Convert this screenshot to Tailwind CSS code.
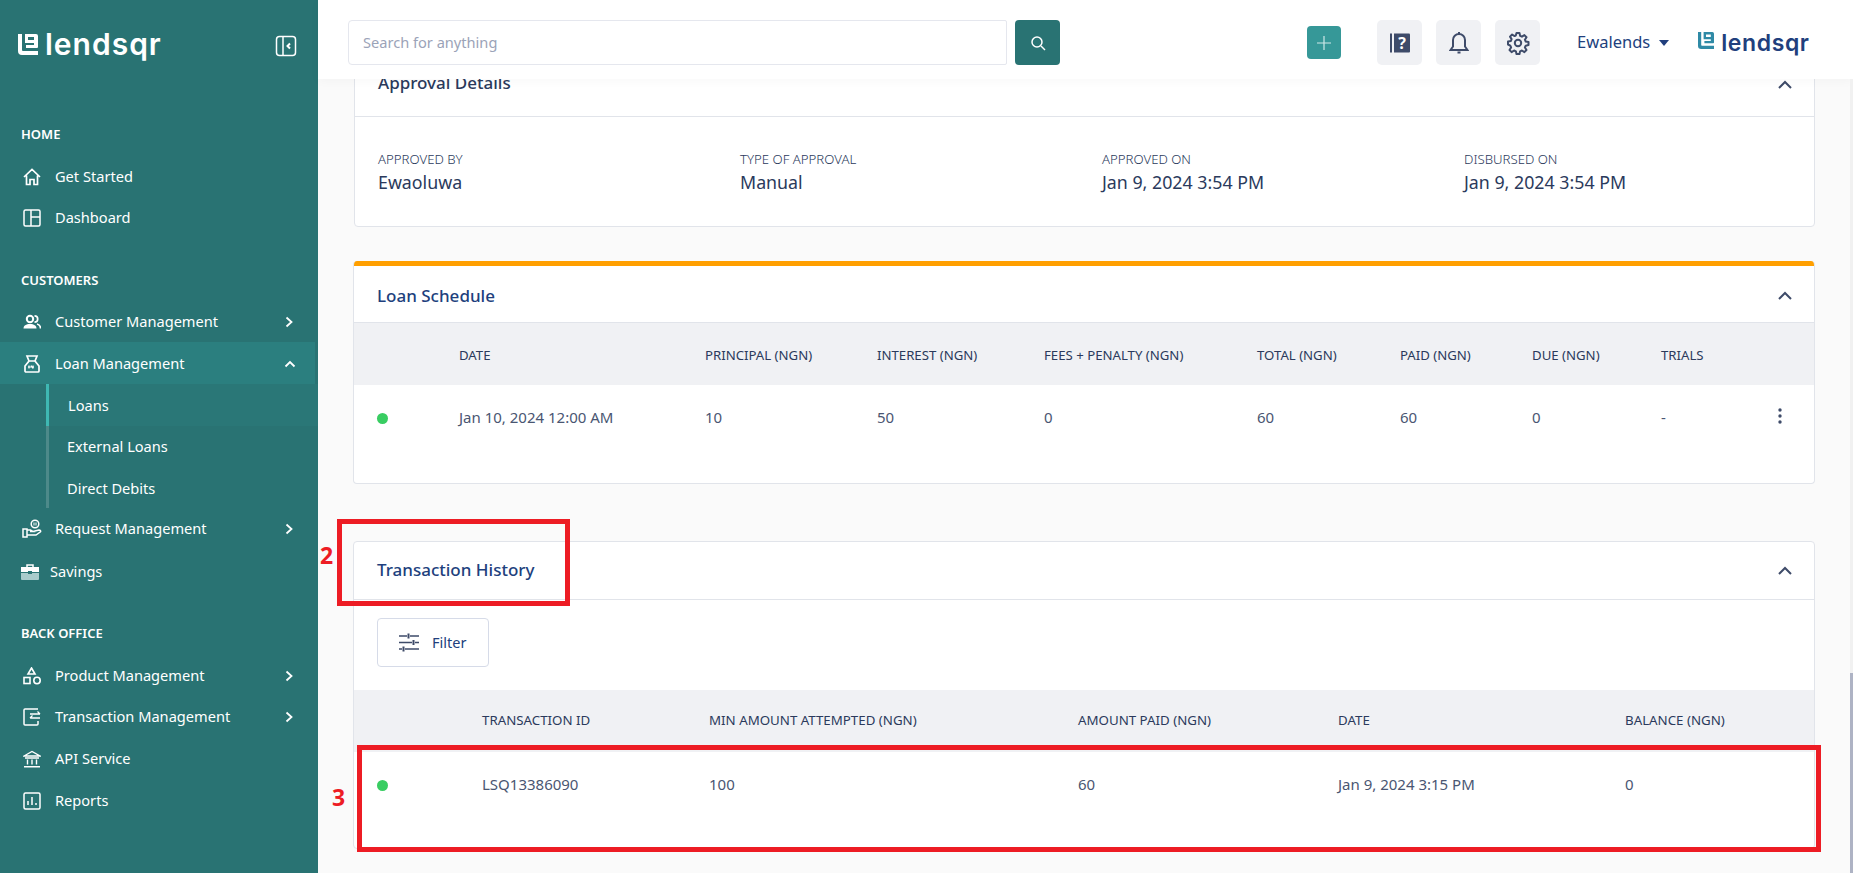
<!DOCTYPE html>
<html lang="en">
<head>
  <meta charset="UTF-8" />
  <meta name="viewport" content="width=device-width, initial-scale=1.0"/>
  <title>Lendsqr - Loan details</title>
  <script src="https://cdn.jsdelivr.net/npm/@tailwindcss/browser@4"></script>
</head>
<body class="font-['Noto_Sans',sans-serif] text-[#213f7d] bg-[#fafafa]">
<div class="relative flex h-[873px] w-[1853px] overflow-hidden">

  <!-- Sidebar -->
  <aside class="w-[318px] shrink-0 bg-[#297373] text-white flex flex-col">
    <div class="h-[113px] pt-[26px] pl-[18px] pr-[21px] flex items-start justify-between">
      <div class="flex items-center gap-[7px] h-[32px]">
        <svg class="mt-[5px]" width="20" height="21" viewBox="0 0 20 21" fill="white"><path d="M0 0h4v16a1 1 0 0 0 1 1h15v4H4a4 4 0 0 1-4-4z"/><path fill-rule="evenodd" d="M7 0h11a2 2 0 0 1 2 2v11a1 1 0 0 1-1 1H8v-3h8V9H7zM10 3v3h6V3z"/></svg>
        <span class="mt-[4px] font-['Inter',sans-serif] font-semibold text-[30px] leading-[32px] tracking-[1px]">lendsqr</span>
      </div>
      <svg class="mt-[9px]" width="22" height="22" viewBox="0 0 22 22" fill="none" stroke="white" stroke-width="1.500"><rect x="1.500" y="1.500" width="19" height="19" rx="3"/><path d="M8 2v18"/><path d="M15 8.500 12.500 11l2.500 2.500" stroke-width="2"/></svg>
    </div>

    <p class="h-[43px] pl-[21px] flex items-center text-[13px] font-semibold">HOME</p>
    <a class="h-[41px] flex items-center pl-[23px] text-[14.600px]">
      <svg class="w-[18px] h-[18px] mr-[14px]" viewBox="0 0 18 18" fill="none" stroke="white" stroke-width="1.700"><path d="M1 9 9 1.500 17 9M3.500 7.500V16.500h3.500v-5h4v5h3.500V7.500"/></svg>Get Started</a>
    <a class="h-[41px] flex items-center pl-[23px] text-[14.600px]">
      <svg class="w-[18px] h-[18px] mr-[14px]" viewBox="0 0 18 18" fill="none" stroke="white" stroke-width="1.500"><rect x="1" y="1" width="16" height="16" rx="1.500"/><path d="M8 1v16M8 8h9"/></svg>Dashboard</a>

    <p class="mt-[22px] h-[41px] pl-[21px] flex items-center text-[13px] font-semibold">CUSTOMERS</p>
    <a class="h-[41px] flex items-center pl-[23px] pr-[24px] text-[14.600px]">
      <svg class="w-[18px] h-[18px] mr-[14px]" viewBox="0 0 18 18" fill="white"><circle cx="7" cy="6" r="3.200" fill="none" stroke="white" stroke-width="2"/><path d="M0.500 15.500c0-3 2.500-4.500 6.500-4.500s6.500 1.500 6.500 4.500z"/><path d="M11.500 2.800a3.200 3.200 0 0 1 0 6.400M14 11c2 .5 3.500 1.800 3.500 4.500" fill="none" stroke="white" stroke-width="1.700"/></svg>
      <span class="flex-1">Customer Management</span>
      <svg width="10" height="12" viewBox="0 0 10 12" fill="none" stroke="white" stroke-width="1.800"><path d="m2.500 1.500 5 4.500-5 4.500"/></svg></a>
    <a class="h-[42px] pt-[2px] mr-[3px] flex items-center pl-[23px] pr-[19px] text-[14.600px] bg-[#2b7f7f]">
      <svg class="w-[18px] h-[18px] mr-[14px]" viewBox="0 0 18 18" fill="none" stroke="white" stroke-width="1.700"><path d="M4 1h10L12 6l4 5v5a1 1 0 0 1-1 1H3a1 1 0 0 1-1-1v-5l4-5zM6 6h6"/><path d="M6 10.500v3M8 10.500l2 3M10 10.500v3M5 12h6" stroke-width="1.200"/></svg>
      <span class="flex-1">Loan Management</span>
      <svg width="12" height="10" viewBox="0 0 12 10" fill="none" stroke="white" stroke-width="1.800"><path d="m1.500 7.500 4.500-4.500 4.500 4.500"/></svg></a>
    <div class="ml-[46px] border-l-[3px] border-[#4d8a8a]">
      <a class="relative h-[42px] pt-[2px] -ml-[3px] flex items-center pl-[19px] text-[14.600px] bg-[#2a7777] border-l-[3px] border-[#3fb8b3]">Loans</a>
      <a class="h-[41px] flex items-center pl-[18px] text-[14.600px]">External Loans</a>
      <a class="h-[41px] pt-[2px] flex items-center pl-[18px] text-[14.600px]">Direct Debits</a>
    </div>
    <a class="h-[41px] flex items-center pl-[22px] pr-[24px] text-[14.600px]">
      <svg class="w-[20px] h-[20px] mr-[13px]" viewBox="0 0 20 20" fill="none" stroke="white" stroke-width="1.500"><circle cx="13" cy="5" r="3.800"/><path d="M12 6.500v-3M14 6.500v-3" stroke-width="1"/><path d="M1 10h4v8H1zM5 11h3.500l2.500 1.500h-3M11 12.500l6-1.500c1.500 0 2 1 1.500 1.800L14 16H5"/></svg>
      <span class="flex-1">Request Management</span>
      <svg width="10" height="12" viewBox="0 0 10 12" fill="none" stroke="white" stroke-width="1.800"><path d="m2.500 1.500 5 4.500-5 4.500"/></svg></a>
    <a class="mt-[2px] h-[42px] flex items-center pl-[21px] text-[14.600px]">
      <svg class="w-[18px] h-[16px] mr-[11px]" viewBox="0 0 18 16" fill="none"><path d="M6 3V1h6v2" stroke="white" stroke-width="1.500"/><path d="M0 3h18v5H0z" fill="white"/><path d="M0 9h18v6a1 1 0 0 1-1 1H1a1 1 0 0 1-1-1z" fill="#a9cbcb"/><path d="M7 7h4v3H7z" fill="#297373"/></svg>Savings</a>

    <p class="mt-[20px] h-[42px] pl-[21px] flex items-center text-[13px] font-semibold">BACK OFFICE</p>
    <a class="h-[41px] flex items-center pl-[23px] pr-[24px] text-[14.600px]">
      <svg class="w-[18px] h-[18px] mr-[14px]" viewBox="0 0 18 18" fill="none" stroke="white" stroke-width="1.600"><path d="M8.500 1 12 7H5z"/><rect x="1" y="10.500" width="6" height="6"/><circle cx="14" cy="13.500" r="3.200"/></svg>
      <span class="flex-1">Product Management</span>
      <svg width="10" height="12" viewBox="0 0 10 12" fill="none" stroke="white" stroke-width="1.800"><path d="m2.500 1.500 5 4.500-5 4.500"/></svg></a>
    <a class="h-[42px] flex items-center pl-[23px] pr-[24px] text-[14.600px]">
      <svg class="w-[18px] h-[18px] mr-[14px]" viewBox="0 0 18 18" fill="none" stroke="white" stroke-width="1.500"><path d="M15 1H2a1 1 0 0 0-1 1v14a1 1 0 0 0 1 1h12a1 1 0 0 0 1-1v-3"/><path d="M7 6h10M14.500 3.500 17 6M17 10H7M9.500 7.500 7 10" stroke-width="1.300"/></svg>
      <span class="flex-1">Transaction Management</span>
      <svg width="10" height="12" viewBox="0 0 10 12" fill="none" stroke="white" stroke-width="1.800"><path d="m2.500 1.500 5 4.500-5 4.500"/></svg></a>
    <a class="h-[42px] flex items-center pl-[23px] text-[14.600px]">
      <svg class="w-[18px] h-[18px] mr-[14px]" viewBox="0 0 18 18" fill="none" stroke="white" stroke-width="1.400"><path d="M1 6 9 1.500 17 6z"/><path d="M2 8h14M4.500 9.500v5M9 9.500v5M13.500 9.500v5M1 16.800h16"/></svg>API Service</a>
    <a class="h-[41px] flex items-center pl-[23px] text-[14.600px]">
      <svg class="w-[18px] h-[18px] mr-[14px]" viewBox="0 0 18 18" fill="none" stroke="white" stroke-width="1.500"><rect x="1" y="1" width="16" height="16" rx="1.500"/><path d="M5 9v4M9 5v8M13 11v2"/></svg>Reports</a>
  </aside>

  <!-- Right side -->
  <div class="flex-1 min-w-0 flex flex-col">
    <header class="relative z-10 h-[79px] shrink-0 bg-white shadow-[0_2px_10px_rgba(0,0,0,0.03)] flex items-center pt-[6px] pl-[30px]">
      <div class="w-[659px] h-[45px] border border-[#e5e7ee] rounded-l-[4px] rounded-r-[2px] flex items-center pl-[14px] text-[14.600px] text-[#9ba3b8]">Search for anything</div>
      <button class="ml-[8px] w-[45px] h-[45px] bg-[#297373] rounded-[4px] flex items-center justify-center">
        <svg width="16" height="16" viewBox="0 0 16 16" fill="none" stroke="white" stroke-width="1.500"><circle cx="7" cy="7" r="5"/><path d="m11 11 4 4"/></svg>
      </button>
      <button class="ml-[247px] w-[34px] h-[33px] bg-[#369898] rounded-[4px] flex items-center justify-center">
        <svg width="14" height="14" viewBox="0 0 14 14" fill="none" stroke="#cfe8e8" stroke-width="1.200"><path d="M7 0v14M0 7h14"/></svg>
      </button>
      <button class="ml-[36px] w-[45px] h-[45px] bg-[#f0f1f4] rounded-[5px] flex items-center justify-center">
        <svg width="22" height="22" viewBox="0 0 22 22"><path d="M1 1.500h2v19H1z" fill="#3e4b69"/><path d="M5 1.500h15a1 1 0 0 1 1 1v17a1 1 0 0 1-1 1H5z" fill="#3e4b69"/><text x="13" y="17" text-anchor="middle" font-size="16" font-weight="700" fill="white" font-family="Noto Sans">?</text></svg>
      </button>
      <button class="ml-[14px] w-[45px] h-[45px] bg-[#f0f1f4] rounded-[5px] flex items-center justify-center">
        <svg width="20" height="24" viewBox="0 0 20 24" fill="none" stroke="#3e4b69" stroke-width="2"><path d="M10 3a6 6 0 0 0-6 6v6.500L1.500 19h17L16 15.500V9a6 6 0 0 0-6-6z"/><path d="M10 1v2M8.500 21.500h3" stroke-width="2"/></svg>
      </button>
      <button class="ml-[14px] w-[45px] h-[45px] bg-[#f0f1f4] rounded-[5px] flex items-center justify-center">
        <svg width="24" height="24" viewBox="0 0 24 24" fill="none" stroke="#3e4b69" stroke-width="2" stroke-linejoin="round"><circle cx="12" cy="12" r="3.200"/><path d="M10.500 2h3l.6 2.900 1.800.8 2.500-1.600 2.100 2.100-1.600 2.500.8 1.800 2.800.6v3l-2.800.6-.8 1.800 1.600 2.500-2.100 2.100-2.500-1.600-1.800.8-.6 2.800h-3l-.6-2.800-1.800-.8-2.500 1.600-2.100-2.100 1.600-2.500-.8-1.800L2 13.500v-3l2.900-.6.700-1.800L4 5.600l2.100-2.100 2.500 1.600 1.300-.8z"/></svg>
      </button>
      <span class="ml-[37px] text-[16.500px] text-[#213f7d]">Ewalends</span>
      <svg class="ml-[9px]" width="10" height="6" viewBox="0 0 10 6"><path d="M0 0h10L5 6z" fill="#213f7d"/></svg>
      <div class="ml-[29px] flex items-center gap-[7px]">
        <svg class="mt-[-4px]" width="16" height="17" viewBox="0 0 20 21" fill="#2f8aa6"><path d="M0 0h4v16a1 1 0 0 0 1 1h15v4H4a4 4 0 0 1-4-4z"/><path fill-rule="evenodd" d="M7 0h11a2 2 0 0 1 2 2v11a1 1 0 0 1-1 1H8v-3h8V9H7zM10 3v3h6V3z"/></svg>
        <span class="font-['Inter',sans-serif] font-semibold text-[23px] leading-[28px] tracking-[.6px] text-[#213f7d]">lendsqr</span>
      </div>
    </header>

    <main class="flex-1 min-h-0 overflow-hidden pl-[35px] pr-[38px] relative">
      <!-- Approval Details -->
      <section class="mt-[-27px] ml-[1px] bg-white border border-[#e1e4ea] rounded-[4px]">
        <div class="h-[64px] border-b border-[#e1e4ea] flex items-center justify-between pb-[3px] pl-[23px] pr-[22px] text-[#2b3a5c]">
          <h3 class="text-[17px] font-medium">Approval Details</h3>
          <svg class="mt-[3px]" width="14" height="9" viewBox="0 0 14 9" fill="none" stroke="#3e4b69" stroke-width="2"><path d="m1 8 6-6 6 6"/></svg>
        </div>
        <div class="h-[109px] grid grid-cols-[362px_362px_362px_1fr] pl-[23px] pt-[33px] text-[#2b3a5c]">
          <div><p class="text-[13.200px] leading-[18px] font-light">APPROVED BY</p><p class="text-[17.800px] leading-[24px] mt-[2px]">Ewaoluwa</p></div>
          <div><p class="text-[13.200px] leading-[18px] font-light">TYPE OF APPROVAL</p><p class="text-[17.800px] leading-[24px] mt-[2px]">Manual</p></div>
          <div><p class="text-[13.200px] leading-[18px] font-light">APPROVED ON</p><p class="text-[17.800px] leading-[24px] mt-[2px]">Jan 9, 2024 3:54 PM</p></div>
          <div><p class="text-[13.200px] leading-[18px] font-light">DISBURSED ON</p><p class="text-[17.800px] leading-[24px] mt-[2px]">Jan 9, 2024 3:54 PM</p></div>
        </div>
      </section>

      <!-- Loan Schedule -->
      <section class="mt-[34px] bg-white border border-[#e1e4ea] border-t-0 rounded-[4px] overflow-hidden">
        <div class="h-[5px] bg-[#ff9f00]"></div>
        <div class="h-[57px] border-b border-[#e1e4ea] flex items-center justify-between pt-[3px] pl-[23px] pr-[22px]">
          <h3 class="text-[17px] font-medium">Loan Schedule</h3>
          <svg width="14" height="9" viewBox="0 0 14 9" fill="none" stroke="#3e4b69" stroke-width="2"><path d="m1 8 6-6 6 6"/></svg>
        </div>
        <div class="h-[62px] pt-[3px] bg-[#f0f1f4] grid grid-cols-[105px_246px_172px_167px_213px_143px_132px_129px_1fr] items-center text-[13.200px] text-[#2b3a5c]">
          <span></span><span>DATE</span><span>PRINCIPAL (NGN)</span><span>INTEREST (NGN)</span><span>FEES + PENALTY (NGN)</span><span>TOTAL (NGN)</span><span>PAID (NGN)</span><span>DUE (NGN)</span><span>TRIALS</span>
        </div>
        <div class="h-[98px] pt-[21px] grid grid-cols-[105px_246px_172px_167px_213px_143px_132px_129px_1fr] items-start text-[15px] text-[#4a5672]">
          <span class="pl-[23px] pt-[7px]"><span class="block w-[11px] h-[11px] rounded-full bg-[#39cd62]"></span></span>
          <span>Jan 10, 2024 12:00 AM</span><span>10</span><span>50</span><span>0</span><span>60</span><span>60</span><span>0</span>
          <span class="flex justify-between pr-[32px]">-
            <svg class="mt-[2px]" width="4" height="16" viewBox="0 0 4 16" fill="#3e4b69"><circle cx="2" cy="2" r="1.700"/><circle cx="2" cy="8" r="1.700"/><circle cx="2" cy="14" r="1.700"/></svg>
          </span>
        </div>
      </section>

      <!-- Transaction History -->
      <section class="mt-[57px] bg-white border border-[#e1e4ea] rounded-[4px]">
        <div class="h-[58px] border-b border-[#e1e4ea] flex items-center justify-between pb-[2px] pl-[23px] pr-[22px]">
          <h3 class="text-[17px] font-medium">Transaction History</h3>
          <svg class="mt-[2px]" width="14" height="9" viewBox="0 0 14 9" fill="none" stroke="#3e4b69" stroke-width="2"><path d="m1 8 6-6 6 6"/></svg>
        </div>
        <div class="h-[90px] pl-[23px] pt-[18px]">
          <button class="w-[112px] h-[49px] border border-[#d6dbe8] rounded-[4px] flex items-center pl-[21px] text-[14.500px]">
            <svg class="mr-[13px]" width="20" height="19" viewBox="0 0 20 19" fill="none" stroke="#3e4b69" stroke-width="1.500"><path d="M0 3h8M11 3h9M0 9.500h13M16 9.500h4M0 16h3M6 16h14"/><path d="M9.500 .5v5M14.500 7v5M4.500 13.500v5" stroke-width="2"/></svg>Filter</button>
        </div>
        <div class="h-[62px] bg-[#f0f1f4] grid grid-cols-[128px_227px_369px_260px_287px_1fr] items-center text-[13.300px] text-[#2b3a5c]">
          <span></span><span>TRANSACTION ID</span><span>MIN AMOUNT ATTEMPTED (NGN)</span><span>AMOUNT PAID (NGN)</span><span>DATE</span><span>BALANCE (NGN)</span>
        </div>
        <div class="h-[96px] pt-[21px] grid grid-cols-[128px_227px_369px_260px_287px_1fr] items-start text-[15px] text-[#4a5672]">
          <span class="pl-[23px] pt-[7px]"><span class="block w-[11px] h-[11px] rounded-full bg-[#39cd62]"></span></span>
          <span>LSQ13386090</span><span>100</span><span>60</span><span>Jan 9, 2024 3:15 PM</span><span>0</span>
        </div>
      </section>
    </main>
  </div>

  <!-- Scrollbar -->
  <div class="absolute z-20 top-[79px] right-0 bottom-0 w-[3px] bg-[#f1f1f1]">
    <div class="absolute top-[594px] bottom-0 w-full bg-[#aeb3c4]"></div>
  </div>

  <!-- Annotation marks laid over the screenshot -->
  <div class="absolute z-20 left-[337px] top-[519px] w-[233px] h-[87px] border-[5px] border-[#ed1c24]"></div>
  <span class="absolute z-20 left-[320px] top-[541px] text-[23px] leading-[28px] font-bold text-[#ed1c24]">2</span>
  <div class="absolute z-20 left-[357px] top-[745px] w-[1464px] h-[107px] border-[5px] border-[#ed1c24]"></div>
  <span class="absolute z-20 left-[332px] top-[783px] text-[23px] leading-[28px] font-bold text-[#ed1c24]">3</span>
</div>
</body>
</html>
